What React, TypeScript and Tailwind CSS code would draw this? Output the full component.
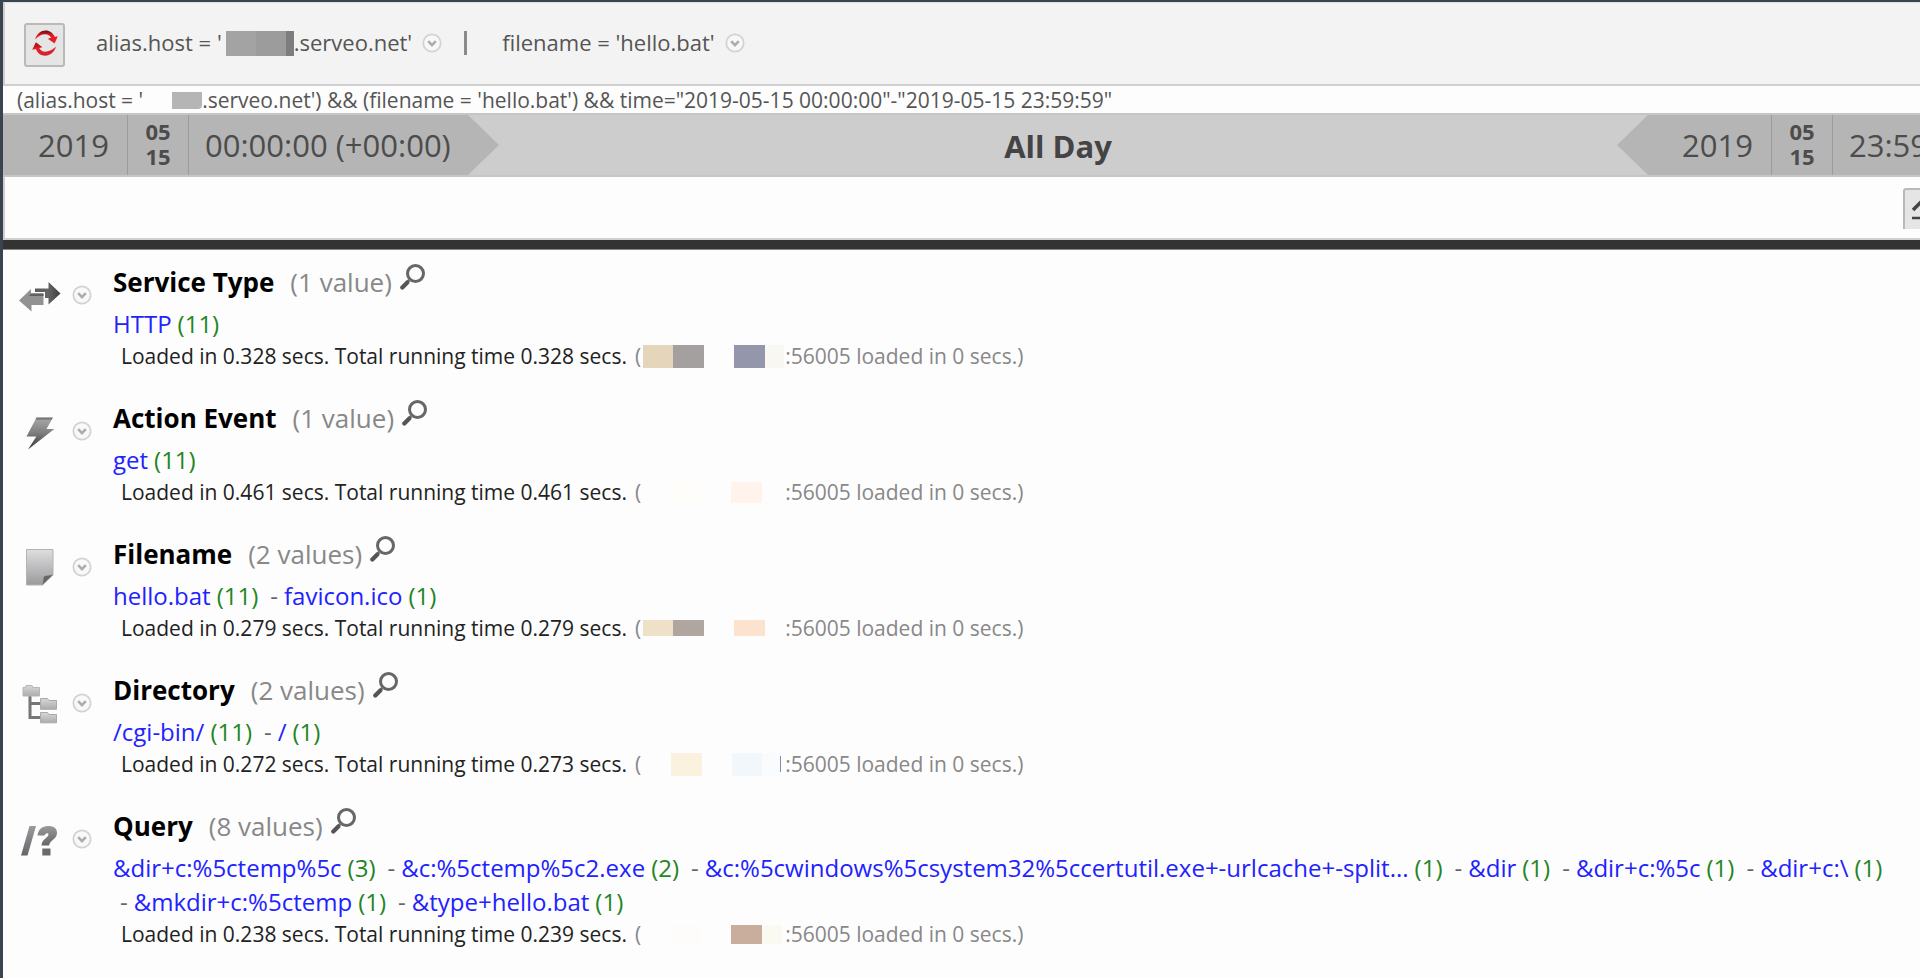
import { type ReactNode } from "react";

function ChevronButton({ label }: { label: string }) {
  return (
    <button type="button" aria-label={label} className="block size-5 shrink-0">
      <svg viewBox="0 0 20 20" className="size-5" fill="none">
        <circle cx="10" cy="10" r="8.7" stroke="#d2d2d2" strokeWidth="1.7" fill="#f8f8f8" />
        <path d="M6.2 8.2 10 12.2l3.8-4" stroke="#adadad" strokeWidth="2.6" />
      </svg>
    </button>
  );
}

function RefreshIcon() {
  return (
    <svg viewBox="0 0 28 28" className="size-7" fill="none">
      <defs>
        <linearGradient id="redTop" x1="0" y1="0" x2="0" y2="1">
          <stop offset="0" stopColor="#5c0d10" />
          <stop offset="0.35" stopColor="#e01a20" />
          <stop offset="1" stopColor="#e8242a" />
        </linearGradient>
        <linearGradient id="redBottom" x1="0" y1="0" x2="0" y2="1">
          <stop offset="0" stopColor="#8a1216" />
          <stop offset="0.5" stopColor="#ec1c24" />
          <stop offset="1" stopColor="#c9262b" />
        </linearGradient>
      </defs>
      <path d="M4 10.5C6 4.500 10 1.500 14.500 1.500c4.300 0 7.500 2.400 9.300 6.500l3-.8-3.200 7.300-6.800-4.800 3.400-.9C18.800 6.600 17 5.300 14.300 5.300 10.500 5.300 7.500 7 4 10.500Z" fill="url(#redTop)" />
      <path d="M25 17.800c-1.800 5.700-6 8.900-10.800 8.900-4.500 0-7.700-2.500-9.300-6.700l-3.700.8 3.700-7.500 6.500 5-3.200.8c1.200 2.400 3.200 3.600 6 3.600 3.700 0 6.400-1.600 10.800-4.900Z" fill="url(#redBottom)" />
    </svg>
  );
}

function MagnifierIcon() {
  return (
    <svg viewBox="0 1 26 28" className="h-7 w-[26px]" fill="none">
      <circle cx="15.500" cy="10.500" r="8" stroke="#666" strokeWidth="3" />
      <path d="M9.800 16.500 6.500 19.800" stroke="#777" strokeWidth="2.800" />
      <path d="M7.300 19.500 2.300 24.500" stroke="#555" strokeWidth="4.200" strokeLinecap="round" />
    </svg>
  );
}

function ArrowsIcon() {
  return (
    <svg viewBox="0 0 48 48" className="size-12">
      <defs>
        <linearGradient id="arrowDark" x1="0" y1="0" x2="1" y2="0">
          <stop offset="0" stopColor="#5a5a5a" />
          <stop offset="0.5" stopColor="#666" />
          <stop offset="1" stopColor="#3c3c3c" />
        </linearGradient>
      </defs>
      <path d="M19 16.500h13.500V10L44.500 21.500 32.500 32.500v-6.500H29V20H19Z" fill="url(#arrowDark)" />
      <path d="M3 28.500 15 17v4.500h12.500V33H15.500v6.500Z" fill="#929292" />
      <path d="M15 21.500h12.500v2.500H13Z" fill="#606060" />
    </svg>
  );
}

function BoltIcon() {
  return (
    <svg viewBox="0 0 48 48" className="size-12">
      <defs>
        <linearGradient id="bolt" x1="0" y1="0" x2="0" y2="1">
          <stop offset="0" stopColor="#606060" />
          <stop offset="0.1" stopColor="#a2a2a2" />
          <stop offset="0.5" stopColor="#7c7c7c" />
          <stop offset="1" stopColor="#333" />
        </linearGradient>
      </defs>
      <path d="M20.500 9.500H37L30.500 21h7.800L12 41.500 20.300 28.500H10.500Z" fill="url(#bolt)" />
    </svg>
  );
}

function FileIcon() {
  return (
    <svg viewBox="0 0 48 48" className="size-12">
      <defs>
        <linearGradient id="sheet" x1="0" y1="0" x2="0" y2="1">
          <stop offset="0" stopColor="#dedede" />
          <stop offset="1" stopColor="#9b9b9e" />
        </linearGradient>
      </defs>
      <path d="M10.500 5.500h26.500V31L26.500 41H10.500Z" fill="url(#sheet)" stroke="#b2b2b2" />
      <path d="M26 41c2-3 1-7 2-8.500 2.500-1.500 6-.5 9-2Z" fill="#666" />
    </svg>
  );
}

function TreeIcon() {
  return (
    <svg viewBox="0 0 48 48" className="size-12">
      <defs>
        <linearGradient id="folder" x1="0" y1="0" x2="0" y2="1">
          <stop offset="0" stopColor="#d8d8da" />
          <stop offset="1" stopColor="#a9abad" />
        </linearGradient>
      </defs>
      <path d="M14 15v22.500h12M14 23.500h12" fill="none" stroke="#777" strokeWidth="3" />
      <path d="M7 7.500h2l1-2h6l1 2h6.500V16H7Z" fill="url(#folder)" stroke="#b5b5b7" />
      <path d="M24.500 18.500h7l1.500 2h7.500v8.800h-16Z" fill="url(#folder)" stroke="#aaaaac" />
      <path d="M24.500 32.500h7l1.500 2h7.500v8.300h-16Z" fill="url(#folder)" stroke="#aaaaac" />
    </svg>
  );
}

function QueryIcon() {
  return (
    <svg viewBox="0 0 48 48" className="size-12">
      <defs>
        <linearGradient id="slash" x1="0" y1="0" x2="0" y2="1">
          <stop offset="0" stopColor="#9a9a9d" />
          <stop offset="1" stopColor="#66666a" />
        </linearGradient>
      </defs>
      <path d="M13.500 10h6.500L11.500 39.500h-6.500Z" fill="url(#slash)" />
      <path d="M21.500 19.500c.8-6 4.500-9.500 10.500-9.500 6 0 9 2.500 9 7 0 6-7 7-8 12.500h-7.500c.4-6.500 6.500-7.500 7-11 .2-1.800-3-2-4 1Z" fill="url(#slash)" />
      <path d="M26.300 32.500h8.200v7h-8.200Z" fill="#6a6a6d" />
    </svg>
  );
}

type Value = { text: string; count: number };
type Block = { width: string; color: string };
type Meta = {
  name: string;
  total: string;
  icon: ReactNode;
  values: Value[];
  loaded: string;
  running: string;
  blockHeight: string;
  blocks: Block[];
};

const wide = "w-[31px]";
const none = "bg-transparent";

const metas: Meta[] = [
  {
    name: "Service Type",
    total: "1 value",
    icon: <ArrowsIcon />,
    values: [{ text: "HTTP", count: 11 }],
    loaded: "0.328",
    running: "0.328",
    blockHeight: "h-[23px]",
    blocks: [
      { width: "w-[2px]", color: none },
      { width: "w-[30px]", color: "bg-[#e5d5ba]" },
      { width: wide, color: "bg-[#a5a0a0]" },
      { width: "w-[30px]", color: none },
      { width: wide, color: "bg-[#9496ab]" },
      { width: "w-[19px]", color: "bg-[#f8f7f2]" },
    ],
  },
  {
    name: "Action Event",
    total: "1 value",
    icon: <BoltIcon />,
    values: [{ text: "get", count: 11 }],
    loaded: "0.461",
    running: "0.461",
    blockHeight: "h-[21px]",
    blocks: [
      { width: "w-[30px]", color: none },
      { width: "w-[30px]", color: "bg-[#fffdf9]" },
      { width: "w-[30px]", color: none },
      { width: wide, color: "bg-[#fff3eb]" },
    ],
  },
  {
    name: "Filename",
    total: "2 values",
    icon: <FileIcon />,
    values: [
      { text: "hello.bat", count: 11 },
      { text: "favicon.ico", count: 1 },
    ],
    loaded: "0.279",
    running: "0.279",
    blockHeight: "h-4",
    blocks: [
      { width: "w-[2px]", color: none },
      { width: "w-[30px]", color: "bg-[#efe1c7]" },
      { width: wide, color: "bg-[#afa6a0]" },
      { width: "w-[30px]", color: none },
      { width: wide, color: "bg-[#fce3ce]" },
    ],
  },
  {
    name: "Directory",
    total: "2 values",
    icon: <TreeIcon />,
    values: [
      { text: "/cgi-bin/", count: 11 },
      { text: "/", count: 1 },
    ],
    loaded: "0.272",
    running: "0.273",
    blockHeight: "h-[23px]",
    blocks: [
      { width: "w-[30px]", color: none },
      { width: wide, color: "bg-[#faf2df]" },
      { width: "w-[30px]", color: none },
      { width: "w-[30px]", color: "bg-[#f2f7fb]" },
      { width: "w-[18px]", color: "bg-[#fafbfd]" },
    ],
  },
  {
    name: "Query",
    total: "8 values",
    icon: <QueryIcon />,
    values: [
      { text: "&dir+c:%5ctemp%5c", count: 3 },
      { text: "&c:%5ctemp%5c2.exe", count: 2 },
      { text: "&c:%5cwindows%5csystem32%5ccertutil.exe+-urlcache+-split...", count: 1 },
      { text: "&dir", count: 1 },
      { text: "&dir+c:%5c", count: 1 },
      { text: "&dir+c:\\", count: 1 },
      { text: "&mkdir+c:%5ctemp", count: 1 },
      { text: "&type+hello.bat", count: 1 },
    ],
    loaded: "0.238",
    running: "0.239",
    blockHeight: "h-[19px]",
    blocks: [
      { width: "w-[30px]", color: none },
      { width: "w-[30px]", color: "bg-[#fdfcfa]" },
      { width: "w-[30px]", color: none },
      { width: wide, color: "bg-[#c9ad9d]" },
      { width: "w-5", color: "bg-[#fbfaf2]" },
    ],
  },
];

function MetaSection({ meta }: { meta: Meta }) {
  return (
    <section className="flex pl-[13px]">
      <div className="mt-2 w-14 shrink-0">{meta.icon}</div>
      <div className="mt-[21px] w-[41px] shrink-0">
        <ChevronButton label={`${meta.name} options`} />
      </div>
      <div className="min-w-0 flex-1">
        <div className="flex text-[26px] leading-9">
          <h2 className="font-bold text-black">{meta.name}</h2>
          <span className="ml-4 text-[#888]">({meta.total})</span>
          <button type="button" aria-label={`Search ${meta.name}`} className="ml-2 block h-7 self-start">
            <MagnifierIcon />
          </button>
        </div>
        <ul className="mt-[7px] flex flex-wrap text-[24px] leading-[34px]">
          {meta.values.map((v, i) => (
            <li key={v.text} className="mr-[5px] flex gap-[6px] whitespace-nowrap">
              {i > 0 && <span className="ml-[7px] text-[#666]">-</span>}
              <a href="#" className="text-[#2222ff]">{v.text}</a>
              <span className="text-[#1f861f]">({v.count})</span>
            </li>
          ))}
        </ul>
        <p className="mt-px ml-2 flex text-[21px] leading-7 text-[#222]">
          <span>Loaded in {meta.loaded} secs. Total running time {meta.running} secs.</span>
          <span className="ml-2 text-[#888]">(</span>
          <span className="flex w-[144px] items-center">
            {meta.blocks.map((b, i) => (
              <span key={i} className={`${meta.blockHeight} ${b.width} ${b.color}`} />
            ))}
            {meta.name === "Directory" && <span className="h-4 w-px bg-[#7d8fb8]" />}
          </span>
          <span className="text-[#888]">:56005 loaded in 0 secs.)</span>
        </p>
      </div>
    </section>
  );
}

function DateParts({ time }: { time: string }) {
  return (
    <>
      <span className="flex w-[89px] items-center">2019</span>
      <span className="flex w-[62px] flex-col justify-center border-x border-[#9c9c9c] pb-[3px] text-center text-[22px] leading-[25px] font-bold">
        <span>05</span>
        <span>15</span>
      </span>
      <span className="flex items-center pl-4 whitespace-nowrap">{time}</span>
    </>
  );
}

export default function App() {
  return (
    <div className="min-h-screen overflow-hidden border-t-2 border-l-[3px] border-[#3a444e] bg-[#fdfdfd] font-['Open_Sans','Noto_Sans',sans-serif]">
      <header className="flex h-[84px] items-center border-t border-b-2 border-l-2 border-t-[#dfe2e4] border-b-[#cfcfcf] border-l-[#cfcfcf] bg-[#f3f3f3] pb-[2px] pl-[19px] text-[22px] text-[#555]">
        <button type="button" aria-label="Refresh" className="mt-5 flex h-11 w-[41px] items-start justify-center self-start rounded-[3px] border-2 border-[#b9b9b9] bg-[#e5e5e5] pt-1">
          <RefreshIcon />
        </button>
        <span className="ml-[31px] flex items-center">
          alias.host = '
          <span className="mt-[2px] ml-1 flex h-[25px]">
            <span className="w-[30px] bg-[#a3a3a3]" />
            <span className="w-[30px] bg-[#9c9c9c]" />
            <span className="w-2 bg-[#7d7d7d]" />
          </span>
          .serveo.net'
        </span>
        <span className="ml-[10px]">
          <ChevronButton label="Host filter options" />
        </span>
        <span className="ml-[22px] h-6 w-[3px] bg-[#8a8a8a]" />
        <span className="ml-[35px]">filename = 'hello.bat'</span>
        <span className="ml-[10px]">
          <ChevronButton label="Filename filter options" />
        </span>
      </header>

      <div className="flex h-[27px] items-center pt-[2px] pl-[14px] text-[21px] leading-[25px] whitespace-nowrap text-[#555]">
        (alias.host = '
        <span className="ml-[29px] h-[17px] w-[30px] rounded-br-sm bg-[#b5b5b5]" />
        .serveo.net') && (filename = 'hello.bat') && time="2019-05-15 00:00:00"-"2019-05-15 23:59:59"
      </div>

      <div className="-mr-[192px] flex h-16 border-y-2 border-[#c6c6c6] bg-[#cdcdcd] text-[31px] text-[#4c4c4c]">
        <div className="flex w-[496px] shrink-0 bg-[#b5b5b5] pl-[35px] [clip-path:polygon(0_0,465px_0,100%_50%,465px_100%,0_100%)]">
          <DateParts time="00:00:00 (+00:00)" />
        </div>
        <div className="flex flex-1 items-center justify-center pt-[3px] font-bold text-[#444]">All Day</div>
        <div className="flex w-[495px] shrink-0 bg-[#b5b5b5] pl-[65px] [clip-path:polygon(0_50%,31px_0,100%_0,100%_100%,31px_100%)]">
          <DateParts time="23:59:59 (+00:00)" />
        </div>
      </div>

      <div className="flex h-[63px] justify-end border-b-2 border-l-2 border-[#cfcfcf] pt-[11px]">
        <button type="button" aria-label="Collapse" className="-mr-6 h-[41px] w-[41px] rounded-t-[3px] border-2 border-b-0 border-[#b9b9b9] bg-[#e5e5e5]">
          <svg viewBox="0 0 37 39" className="h-[39px] w-[37px]" fill="none" stroke="#444">
            <path d="M8 20 18.500 9.500 29 20" strokeWidth="3.500" />
            <path d="M7 28h23" strokeWidth="2.500" />
          </svg>
        </button>
      </div>
      <div className="h-[10px] border-b border-[#888] bg-[#333]" />

      <main className="flex flex-col gap-[30px] pt-[14px] pb-6">
        {metas.map((m) => (
          <MetaSection key={m.name} meta={m} />
        ))}
      </main>
    </div>
  );
}
